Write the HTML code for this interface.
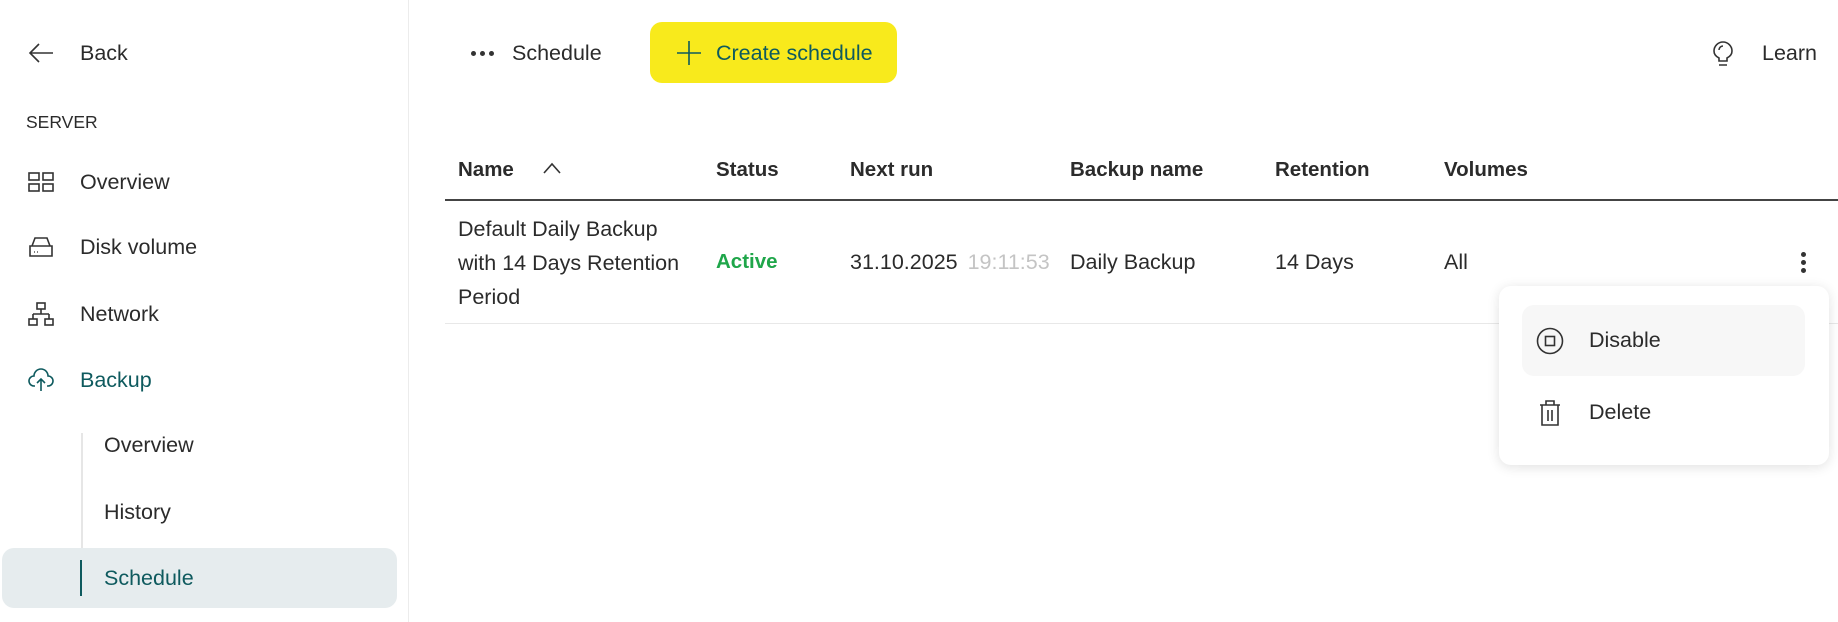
<!DOCTYPE html>
<html><head><meta charset="utf-8"><style>
*{margin:0;padding:0;box-sizing:border-box}
body{width:1838px;height:622px;background:#fff;font-family:"Liberation Sans",sans-serif;font-size:21.5px;color:#2b2b2b;position:relative;overflow:hidden}
.a{position:absolute;white-space:nowrap;line-height:24px}
svg{position:absolute;fill:none;stroke:#333;stroke-width:1.6}
.b{font-weight:bold;font-size:20.5px}
</style></head><body>
<div style="position:absolute;left:408px;top:0;width:1px;height:622px;background:#ececec"></div>
<svg style="left:28px;top:41px" width="26" height="24" viewBox="0 0 26 24"><path d="M25 12H3M11 3L2 12l9 9"/></svg>
<div class="a" style="left:80px;top:41px">Back</div>
<div class="a" style="left:26px;top:110px;font-size:17.5px">SERVER</div>
<svg style="left:28px;top:172px" width="26" height="20" viewBox="0 0 26 20"><rect x="1" y="1" width="10" height="7"/><rect x="15" y="1" width="10" height="7"/><rect x="1" y="12" width="10" height="7"/><rect x="15" y="12" width="10" height="7"/></svg>
<div class="a" style="left:80px;top:170px">Overview</div>
<svg style="left:28px;top:236px" width="26" height="22" viewBox="0 0 26 22"><path d="M4 10L7 2h12l3 8M2 10h22v10H2z"/><path d="M6 16h1M9 16h1" stroke-width="1.2"/></svg>
<div class="a" style="left:80px;top:235px">Disk volume</div>
<svg style="left:28px;top:302px" width="26" height="24" viewBox="0 0 26 24"><rect x="9" y="1" width="8" height="6"/><path d="M13 7v5M5 12h16M5 12v5M21 12v5"/><rect x="1" y="17" width="8" height="6"/><rect x="17" y="17" width="8" height="6"/></svg>
<div class="a" style="left:80px;top:302px">Network</div>
<svg style="left:28px;top:367px" width="26" height="26" viewBox="0 0 26 26"><path d="M7 19H6a5 5 0 0 1 0-10 7 7 0 0 1 14 0 5 5 0 0 1 0 10h-1M13 24V12M9 16l4-4 4 4" stroke="#0e5a5e"/></svg>
<div class="a" style="left:80px;top:368px;color:#0e5a5e">Backup</div>
<div style="position:absolute;left:81px;top:433px;width:2px;height:116px;background:#e6e6e6"></div>
<div class="a" style="left:104px;top:433px">Overview</div>
<div class="a" style="left:104px;top:500px">History</div>
<div style="position:absolute;left:2px;top:548px;width:395px;height:60px;background:#e6ecee;border-radius:12px"></div>
<div style="position:absolute;left:80px;top:560px;width:2px;height:36px;background:#0e5a5e"></div>
<div class="a" style="left:104px;top:566px;color:#0e5a5e">Schedule</div>

<div style="position:absolute;left:471px;top:51px;width:26px;height:6px">
<span style="position:absolute;left:0;width:5px;height:5px;border-radius:50%;background:#333"></span><span style="position:absolute;left:9px;width:5px;height:5px;border-radius:50%;background:#333"></span><span style="position:absolute;left:18px;width:5px;height:5px;border-radius:50%;background:#333"></span></div>
<div class="a" style="left:512px;top:41px">Schedule</div>
<div style="position:absolute;left:650px;top:22px;width:247px;height:61px;background:#f8ea1c;border-radius:12px"></div>
<svg style="left:676px;top:40px" width="26" height="26" viewBox="0 0 26 26"><path d="M13 1v24M1 13h24" stroke="#0e5a5e"/></svg>
<div class="a" style="left:716px;top:41px;color:#0e5a5e">Create schedule</div>
<svg style="left:1712px;top:41px" width="22" height="28" viewBox="0 0 22 28"><path d="M7 20v-3C3 15 2 12 2 10a9 9 0 0 1 18 0c0 2-1 5-5 7v3zM7 24h8M7 9a4 4 0 0 1 4-4"/></svg>
<div class="a" style="left:1762px;top:41px">Learn</div>

<div class="a b" style="left:458px;top:158px">Name</div>
<svg style="left:543px;top:162px" width="18" height="12" viewBox="0 0 18 12"><path d="M1 11l8-9 8 9"/></svg>
<div class="a b" style="left:716px;top:158px">Status</div>
<div class="a b" style="left:850px;top:158px">Next run</div>
<div class="a b" style="left:1070px;top:158px">Backup name</div>
<div class="a b" style="left:1275px;top:158px">Retention</div>
<div class="a b" style="left:1444px;top:158px">Volumes</div>
<div style="position:absolute;left:445px;top:199px;width:1393px;height:2px;background:#444"></div>
<div class="a" style="left:458px;top:212px;line-height:34px;white-space:normal;width:260px">Default Daily Backup<br>with 14 Days Retention<br>Period</div>
<div class="a b" style="left:716px;top:250px;color:#1fa64a">Active</div>
<div class="a" style="left:850px;top:250px">31.10.2025 <span style="color:#c4c4c4;margin-left:4px">19:11:53</span></div>
<div class="a" style="left:1070px;top:250px">Daily Backup</div>
<div class="a" style="left:1275px;top:250px">14 Days</div>
<div class="a" style="left:1444px;top:250px">All</div>
<div style="position:absolute;left:445px;top:323px;width:1393px;height:1px;background:#e8e8e8"></div>
<div style="position:absolute;left:1801px;top:252px;width:5px">
<div style="width:5px;height:5px;border-radius:50%;background:#333;margin-bottom:3px"></div><div style="width:5px;height:5px;border-radius:50%;background:#333;margin-bottom:3px"></div><div style="width:5px;height:5px;border-radius:50%;background:#333"></div></div>

<div style="position:absolute;left:1499px;top:286px;width:330px;height:179px;background:#fff;border-radius:12px;box-shadow:0 2px 12px rgba(0,0,0,.12)"></div>
<div style="position:absolute;left:1522px;top:305px;width:283px;height:71px;background:#f7f7f7;border-radius:12px"></div>
<svg style="left:1536px;top:327px" width="28" height="28" viewBox="0 0 28 28"><circle cx="14" cy="14" r="12.5"/><rect x="9.5" y="9.5" width="9" height="9"/></svg>
<div class="a" style="left:1589px;top:328px">Disable</div>
<svg style="left:1538px;top:399px" width="24" height="28" viewBox="0 0 24 28"><path d="M2 6h20M8 6V2h8v4M4 6v20h16V6M10 11v11M14 11v11"/></svg>
<div class="a" style="left:1589px;top:400px">Delete</div>
</body></html>
